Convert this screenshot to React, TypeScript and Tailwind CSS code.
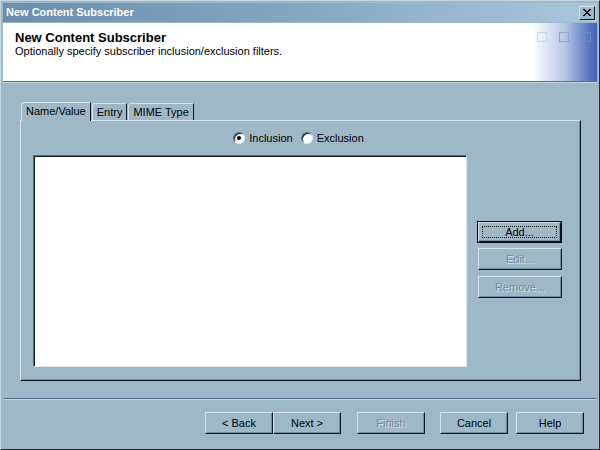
import React from 'react';

const font = { fontFamily: '"Liberation Sans", Arial, sans-serif' };

const Btn: React.FC<{ label: string; disabled?: boolean; primary?: boolean; w?: string }> = ({ label, disabled, primary, w = 'w-[68px]' }) => (
  <div className={`${w} h-[22px] ${primary ? 'border border-black' : ''}`}>
    <div
      className={`relative h-full w-full flex items-center justify-center border border-t-[#d3e2eb] border-l-[#d3e2eb] border-r-[#0d1820] border-b-[#0d1820] shadow-[inset_-1px_-1px_0_#6f8ea5] bg-[#9fb8c7] text-[11px] ${
        disabled ? 'text-[#6d8ca3] [text-shadow:1px_1px_0_#d3e2eb]' : 'text-black'
      }`}
    >
      {label}
      {primary && <span className="absolute inset-[3px] border border-dotted border-black" />}
    </div>
  </div>
);

const Radio: React.FC<{ label: string; checked?: boolean }> = ({ label, checked }) => (
  <div className="flex items-center gap-[4px]">
    <div className="w-[12px] h-[12px] rounded-full bg-white border border-t-[#4f6d83] border-l-[#4f6d83] border-r-[#e3eef4] border-b-[#e3eef4] shadow-[inset_1px_1px_0_#0d1820] flex items-center justify-center">
      {checked && <div className="w-[4px] h-[4px] rounded-full bg-black" />}
    </div>
    <span className="text-[11px] text-black">{label}</span>
  </div>
);

export default function App() {
  return (
    <div
      style={font}
      className="w-[600px] h-[450px] bg-[#9fb8c7] border border-t-[#c5d7e2] border-l-[#c5d7e2] border-r-[#1f2f3c] border-b-[#1f2f3c] p-[2px] flex flex-col overflow-hidden"
    >
      {/* Title bar */}
      <div className="h-[19px] shrink-0 flex items-center justify-between pl-[3px] pr-[2px] bg-gradient-to-r from-[#6a8fae] via-[#84a7c2] to-[#a8c8dc]">
        <span className="text-white font-bold text-[11px] leading-none">New Content Subscriber</span>
        <div className="w-[16px] h-[14px] bg-[#9fb8c7] border border-t-[#d3e2eb] border-l-[#d3e2eb] border-r-[#0d1820] border-b-[#0d1820] flex items-center justify-center">
          <svg width="8" height="7" viewBox="0 0 8 7">
            <path d="M0 0 L7 7 M1 0 L8 7 M7 0 L0 7 M8 0 L1 7" stroke="black" strokeWidth="1" />
          </svg>
        </div>
      </div>

      {/* Header */}
      <div className="h-[59px] shrink-0 bg-white relative border-b border-b-[#4d708c] mt-[1px]">
        <div className="absolute right-0 top-0 bottom-0 w-[65px] bg-gradient-to-r from-white via-[#b8c6e6] to-[#3f5fb4]" />
        <div className="absolute top-[9px] right-[50px] w-[10px] h-[10px] border border-[#c9d4e6]" />
        <div className="absolute top-[9px] right-[28px] w-[10px] h-[10px] border border-[#8ea3cf]" />
        <div className="absolute top-[9px] right-[6px] w-[10px] h-[10px] border border-[#6f89c4]" />
        <div className="relative pl-[12px] pt-[7px]">
          <div className="font-bold text-[13px] leading-[15px] text-black">New Content Subscriber</div>
          <div className="text-[11px] leading-[13px] text-black">Optionally specify subscriber inclusion/exclusion filters.</div>
        </div>
      </div>
      <div className="h-px bg-[#c5d7e2]" />

      {/* Body */}
      <div className="flex-1 flex flex-col pl-[17px] pr-[17px] pt-[18px]">
        {/* Tabs */}
        <div className="flex items-end h-[19px] pl-[1px] relative z-10">
          <div className="h-[19px] px-[4px] flex items-center text-[11px] bg-[#9fb8c7] border-l border-t border-t-[#d3e2eb] border-l-[#d3e2eb] border-r border-r-[#0d1820] rounded-tl-[3px] -mb-px pb-px">
            Name/Value
          </div>
          <div className="h-[17px] px-[4px] flex items-center text-[11px] border-l border-t border-t-[#d3e2eb] border-l-[#d3e2eb] border-r border-r-[#0d1820] rounded-tl-[3px] ml-[1px]">
            Entry
          </div>
          <div className="h-[17px] px-[4px] flex items-center text-[11px] border-l border-t border-t-[#d3e2eb] border-l-[#d3e2eb] border-r border-r-[#0d1820] rounded-tl-[3px] ml-[1px]">
            MIME Type
          </div>
        </div>

        {/* Tab panel */}
        <div className="w-[561px] h-[261px] border border-t-[#d3e2eb] border-l-[#d3e2eb] border-r-[#0d1820] border-b-[#0d1820] shadow-[inset_-1px_-1px_0_#6f8ea5] flex flex-col">
          <div className="h-[34px] flex items-center justify-center gap-[8px] pr-[4px]">
            <Radio label="Inclusion" checked />
            <Radio label="Exclusion" />
          </div>
          <div className="flex pl-[12px]">
            <div className="w-[434px] h-[212px] bg-white border border-t-[#4f6d83] border-l-[#4f6d83] border-r-[#e3eef4] border-b-[#e3eef4] shadow-[inset_1px_1px_0_#0d1820]" />
            <div className="flex flex-col gap-[5px] ml-[10px] mt-[66px]">
              <Btn label="Add..." primary w="w-[85px]" />
              <div className="pl-[1px] flex flex-col gap-[6px]">
                <Btn label="Edit..." disabled w="w-[84px]" />
                <Btn label="Remove..." disabled w="w-[84px]" />
              </div>
            </div>
          </div>
        </div>
      </div>

      {/* Separator */}
      <div className="h-px bg-[#4d708c] mx-[1px]" />
      <div className="h-px bg-[#c5d7e2] mx-[1px]" />

      {/* Footer buttons */}
      <div className="h-[47px] shrink-0 flex items-start pt-[12px] pl-[202px]">
        <Btn label="< Back" />
        <Btn label="Next >" />
        <div className="ml-[16px]">
          <Btn label="Finish" disabled />
        </div>
        <div className="ml-[15px]">
          <Btn label="Cancel" />
        </div>
        <div className="ml-[8px]">
          <Btn label="Help" />
        </div>
      </div>
    </div>
  );
}
